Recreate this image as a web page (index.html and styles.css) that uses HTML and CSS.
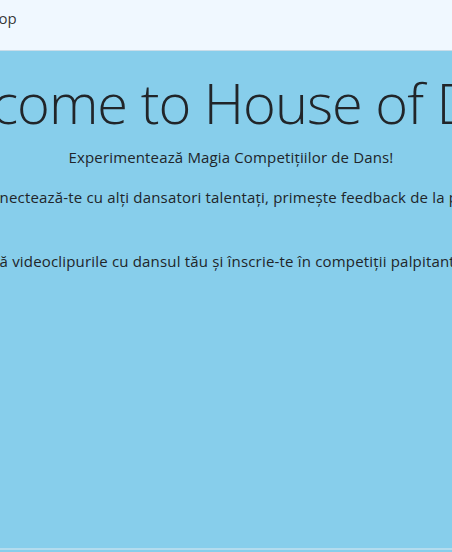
FILE: index.html
```html
<!DOCTYPE html>
<html lang="ro">
<head>
<meta charset="utf-8">
<title>House of Dans</title>
<link rel="stylesheet" href="styles.css">
</head>
<body>
<div class="site">
  <div class="frame">
    <header class="navbar">
      <a class="brand" href="#">House of Dans Workshop</a>
    </header>
    <main class="hero">
      <h1 class="hero-title">Welcome to House of Dans</h1>
      <p class="hero-lead">Experimentează Magia Competițiilor de Dans!</p>
      <div class="hero-copy">
        <p class="hero-text hero-text-first">Conectează-te cu alți dansatori talentați, primește feedback de la profesioniști și jurați</p>
        <p class="hero-text">Încarcă videoclipurile cu dansul tău și înscrie-te în competiții palpitante și câștigă premii mari</p>
      </div>
    </main>
    <footer class="footer"></footer>
  </div>
</div>
</body>
</html>
```

FILE: styles.css
```css
html, body {
  margin: 0;
  padding: 0;
  overflow-x: hidden;
}

body {
  background: #87ceeb;
  color: #212529;
  font-family: "Open Sans", "Noto Sans", sans-serif;
  font-size: 15px;
  line-height: 24px;
}

.site {
  display: flex;
  justify-content: center;
  padding-left: 10px;
}

.frame {
  flex: 0 0 900px;
  min-height: 100vh;
  display: flex;
  flex-direction: column;
}

.navbar {
  height: 44px;
  padding-top: 6px;
  background: #f0f8ff;
  border-bottom: 1px solid #c9dde9;
  display: flex;
  align-items: flex-start;
}

.brand {
  padding-left: 58px;
  color: rgba(0, 0, 0, 0.8);
  text-decoration: none;
  white-space: nowrap;
}

.hero {
  flex: 1;
  display: flex;
  flex-direction: column;
  align-items: center;
  padding-top: 18px;
}

.hero-title {
  margin: 0 0 9px;
  font-size: 56px;
  font-weight: 300;
  line-height: 1.2;
  letter-spacing: -1px;
  white-space: nowrap;
}

.hero-lead {
  margin: 0 0 16px;
  letter-spacing: 0.15px;
  white-space: nowrap;
}

.hero-copy {
  display: flex;
  flex-direction: column;
  align-items: center;
  padding-left: 114px;
}

.hero-text {
  margin: 0 0 16px;
  letter-spacing: 0.18px;
  white-space: nowrap;
}

.hero-text-first {
  margin-bottom: 40px;
}

.footer {
  height: 2px;
  border-top: 2px solid #b4dcee;
}
```
